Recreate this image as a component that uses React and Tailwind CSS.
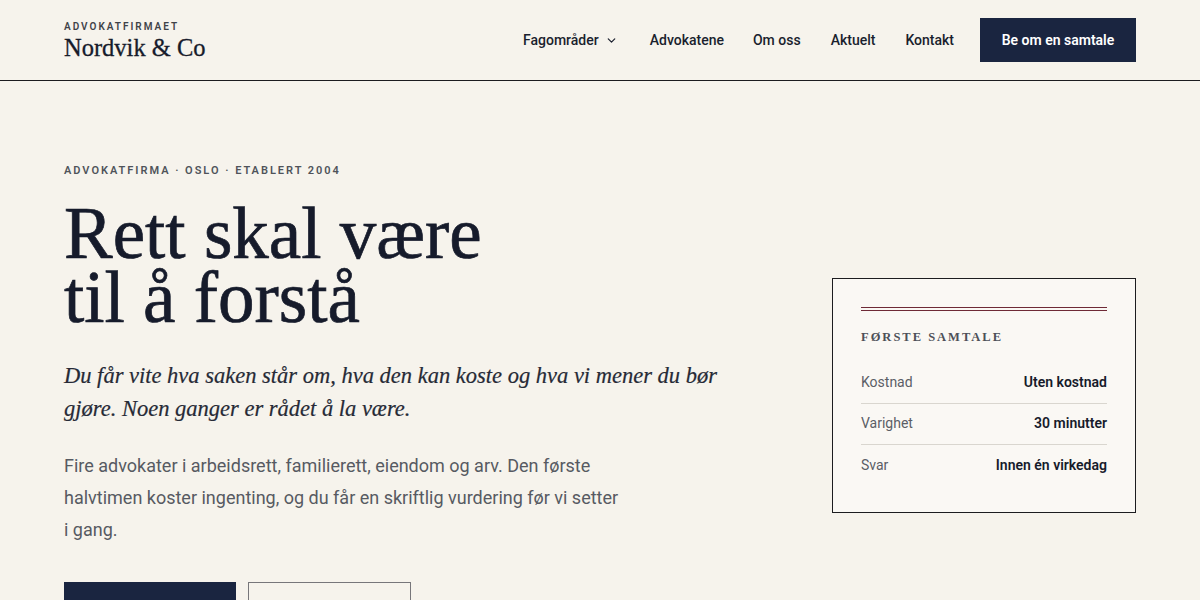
import React from "react";
import { ChevronDown } from "lucide-react";

const serif = { fontFamily: '"Liberation Serif", "Times New Roman", serif' };

function Header() {
  return (
    <header className="h-[81px] border-b border-[#1c1c1f] px-16 flex items-center justify-between">
      <div className="flex flex-col pt-[2px]">
        <span className="font-['Roboto',sans-serif] text-[10px] leading-[12px] font-semibold tracking-[0.2em] text-[#3f4248]">
          ADVOKATFIRMAET
        </span>
        <span className="font-['Liberation_Serif',serif] text-[24.5px] leading-[26px] text-[#161b2b] mt-[2px] [-webkit-text-stroke:0.3px_#161b2b]">
          Nordvik &amp; Co
        </span>
      </div>
      <nav className="flex items-center font-['Roboto',sans-serif] text-[14px] font-medium text-[#1a1f2e]">
        <a className="flex items-center gap-[6px]">
          Fagområder
          <ChevronDown size={13} strokeWidth={2.25} className="mt-[1px]" />
        </a>
        <a className="ml-[32px]">Advokatene</a>
        <a className="ml-[29px]">Om oss</a>
        <a className="ml-[30px]">Aktuelt</a>
        <a className="ml-[30px]">Kontakt</a>
        <button className="ml-[26px] h-[44px] w-[156px] bg-[#1a2540] text-white text-[14px] font-semibold">
          Be om en samtale
        </button>
      </nav>
    </header>
  );
}

function InfoRow({ label, value, last }) {
  return (
    <div
      className={
        "flex items-center justify-between h-[41px] " +
        (last ? "" : "border-b border-[#d9d6cf]")
      }
    >
      <span className="text-[14px] text-[#5b5e66]">{label}</span>
      <span className="text-[14px] font-semibold text-[#161b2b]">{value}</span>
    </div>
  );
}

function IntroCard() {
  return (
    <aside className="mt-[115px] w-[304px] border border-[#1c1c1f] bg-[#faf8f4] px-[28px] pt-[28px] pb-[26px] font-['Roboto',sans-serif]">
      <div className="border-t border-b border-[#6e2a36] h-[4px]" />
      <div
        style={serif}
        className="mt-[17px] text-[12.5px] font-bold tracking-[0.16em] text-[#4d5058]"
      >
        FØRSTE SAMTALE
      </div>
      <div className="mt-[16px]">
        <InfoRow label="Kostnad" value="Uten kostnad" />
        <InfoRow label="Varighet" value="30 minutter" />
        <InfoRow label="Svar" value="Innen én virkedag" last />
      </div>
    </aside>
  );
}

export default function App() {
  return (
    <div className="min-h-[600px] bg-[#f6f3ec] overflow-hidden">
      <Header />
      <main className="px-16 pt-[82px] flex items-start justify-between">
        <section className="w-[700px]">
          <p className="font-['Roboto',sans-serif] text-[11px] font-semibold tracking-[0.18em] text-[#4f535a]">
            ADVOKATFIRMA · OSLO · ETABLERT 2004
          </p>
          <h1
            style={serif}
            className="mt-[22px] text-[73px] leading-[64px] text-[#161b2b] [-webkit-text-stroke:0.7px_#161b2b]"
          >
            Rett skal være
            <br />
            til å forstå
          </h1>
          <p
            style={serif}
            className="mt-[29px] w-[690px] text-[22.5px] leading-[33px] italic text-[#262a36] [-webkit-text-stroke:0.2px_#262a36]"
          >
            Du får vite hva saken står om, hva den kan koste og hva vi mener du bør
            gjøre. Noen ganger er rådet å la være.
          </p>
          <p className="mt-[25px] w-[560px] font-['Roboto',sans-serif] text-[18px] leading-[32px] text-[#575a62]">
            Fire advokater i arbeidsrett, familierett, eiendom og arv. Den første
            halvtimen koster ingenting, og du får en skriftlig vurdering før vi setter
            i gang.
          </p>
          <div className="mt-[36px] flex gap-[12px] font-['Roboto',sans-serif] text-[15px] font-semibold">
            <button className="h-[56px] w-[172px] bg-[#1a2540] text-white">
              Be om en samtale
            </button>
            <button className="h-[56px] w-[163px] border border-[#77767a] text-[#161b2b]">
              Fagområder
            </button>
          </div>
        </section>
        <IntroCard />
      </main>
    </div>
  );
}
